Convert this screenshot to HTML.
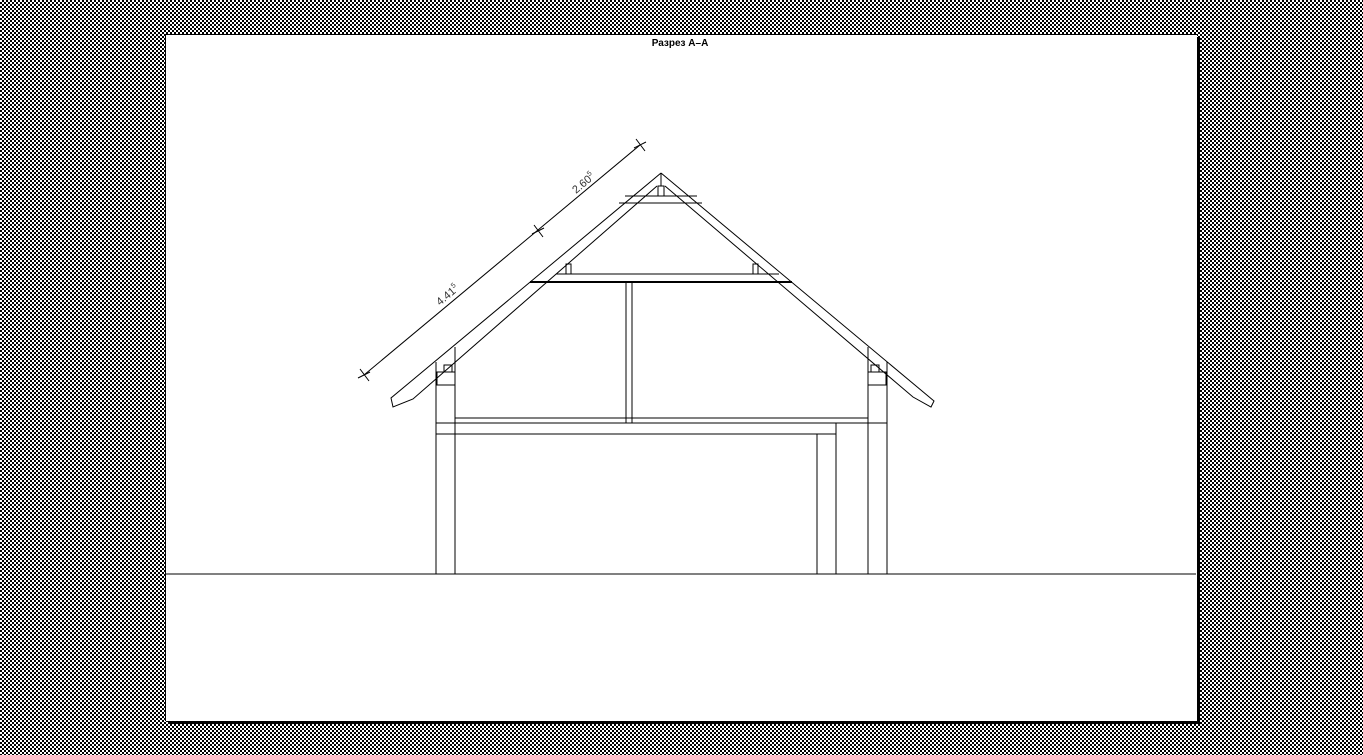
<!DOCTYPE html>
<html><head><meta charset="utf-8"><style>
html,body{margin:0;padding:0;width:1363px;height:755px;overflow:hidden}
body{background-color:#fff;background-image:conic-gradient(#000 25%,#fff 0 50%,#000 0 75%,#fff 0);background-size:4px 4px}
#paper{position:absolute;left:165px;top:34px;width:1031px;height:686px;background:#fff;border-left:1px solid #000;border-top:1px solid #000;box-shadow:3px 3px 0 #000}
svg{position:absolute;left:0;top:0}
</style></head><body>
<div id="paper"></div>
<svg width="1363" height="755" viewBox="0 0 1363 755" fill="none" stroke="#000" stroke-width="1">
<text x="680" y="46" font-family="Liberation Sans, sans-serif" font-size="10" font-weight="bold" text-anchor="middle" fill="#000" stroke="none">Разрез А–А</text>
<path d="M661 173 L391 398 L393 407 L413 399 L657 186"/>
<path d="M661 173 L934 401 L931 407 L913 397 L665 186"/>
<path d="M661 173 V186"/>
<rect x="658" y="186" width="6" height="10"/>
<path d="M625 196 H697 M619 203 H702"/>
<path d="M556 274 H779"/>
<path d="M530 282 H792" stroke-width="2"/>
<rect x="566" y="264" width="5" height="10"/><rect x="753" y="264" width="5" height="10"/>
<path d="M626 283 V423 M632 283 V423"/>
<path d="M436 362 V574 M455 347 V574 M868 347 V574 M887 362 V574"/>
<rect x="437" y="372" width="18" height="13"/><rect x="444" y="365" width="8" height="7"/>
<rect x="868" y="372" width="18" height="13"/><rect x="871" y="365" width="8" height="7"/>
<path d="M455 418 H868 M436 423 H887 M436 434 H836 M817 434 V574 M836 423 V574"/>
<path d="M166 574 H1196"/>
<path d="M364 375 L640 145"/>
<path d="M360 369 L369 381 M358 378 L370 372 M534 225 L543 237 M532 234 L544 228 M636 139 L645 151 M634 148 L646 142"/>
<text transform="translate(440 306) rotate(-40)" font-family="Liberation Sans, sans-serif" font-size="11" fill="#333" stroke="none">4.41<tspan font-size="7" dy="-5">5</tspan></text>
<text transform="translate(576 194) rotate(-40)" font-family="Liberation Sans, sans-serif" font-size="11" fill="#333" stroke="none">2.60<tspan font-size="7" dy="-5">5</tspan></text>
</svg>
</body></html>
